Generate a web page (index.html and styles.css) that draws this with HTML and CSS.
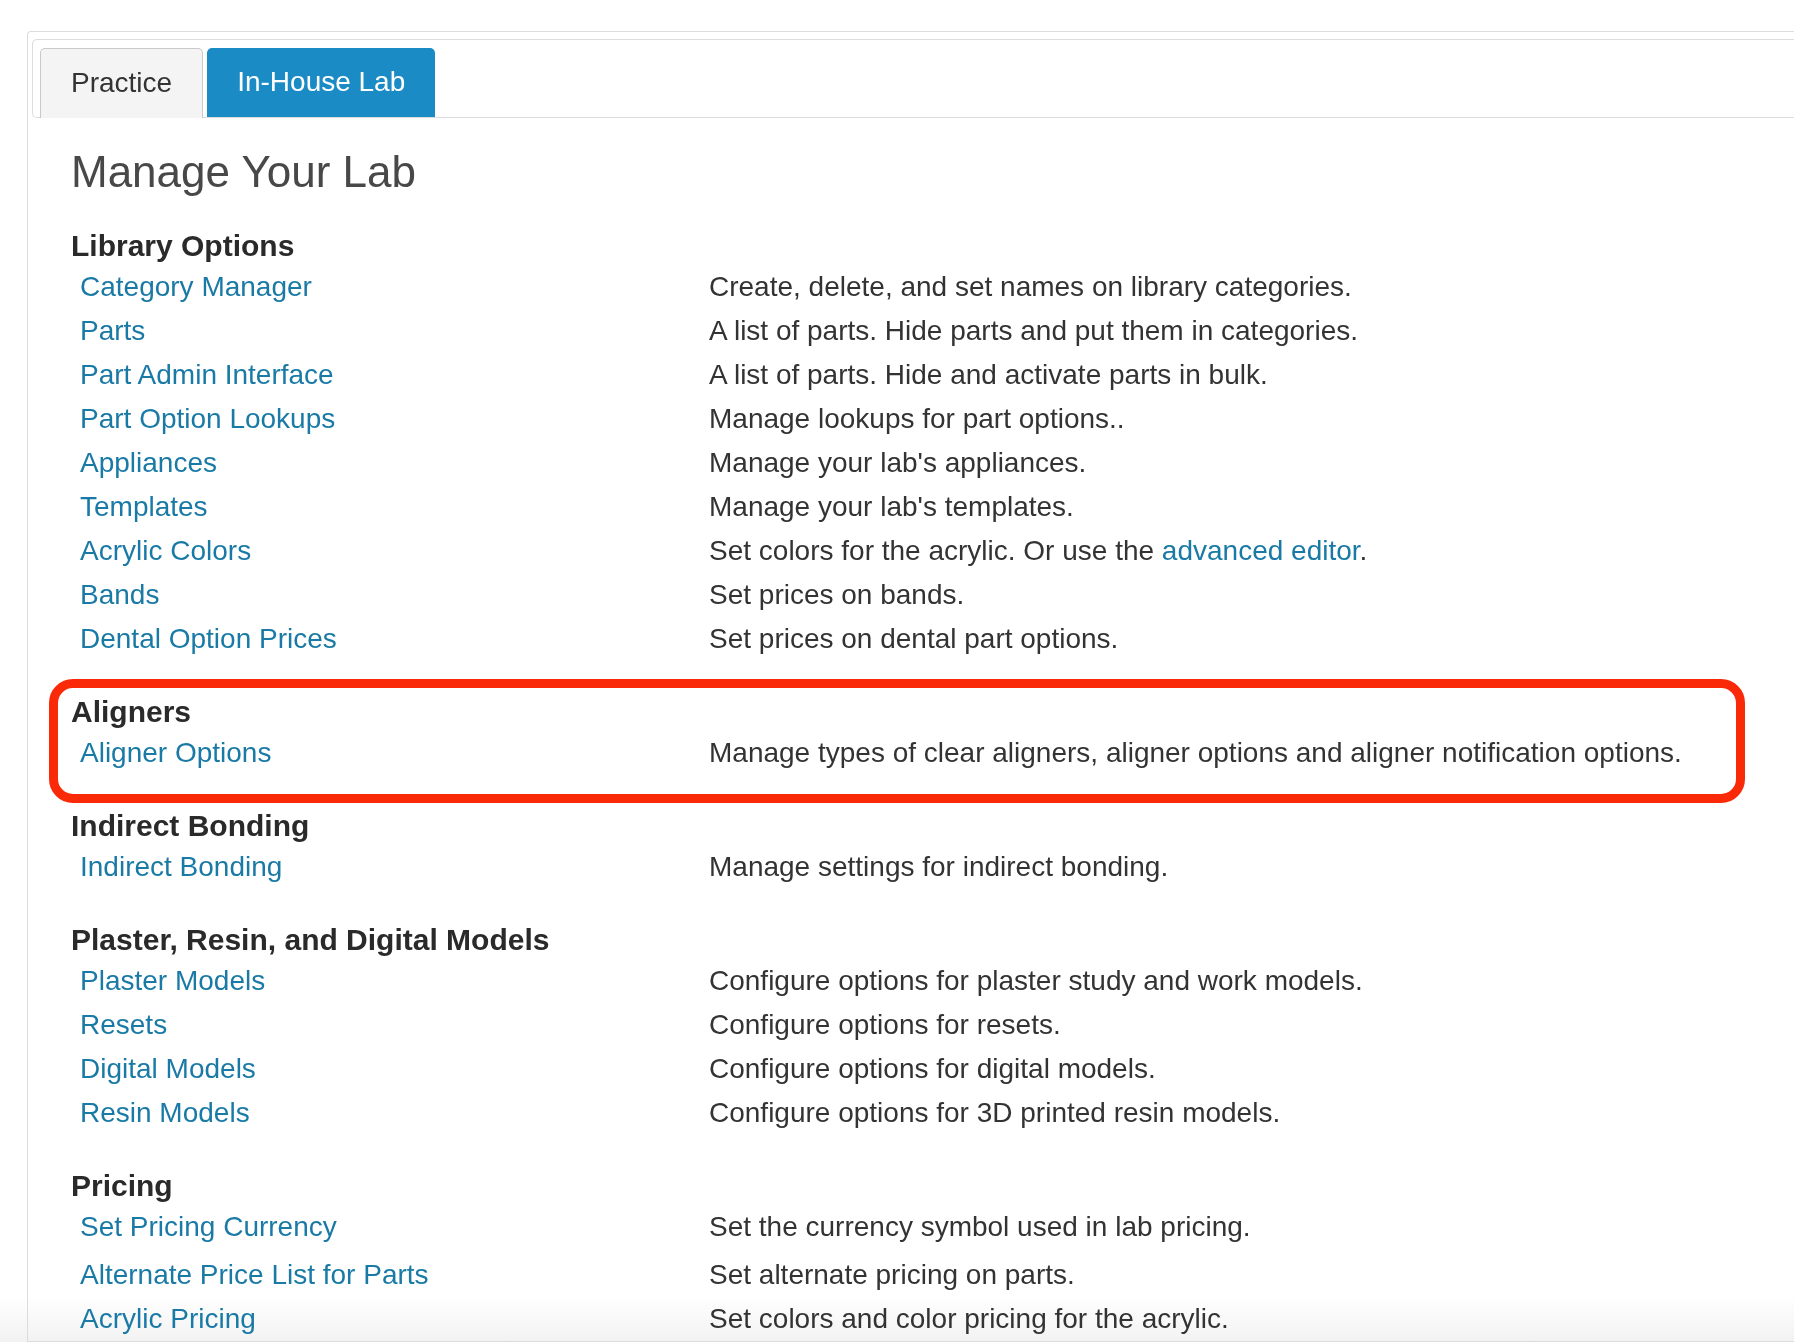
FILE: index.html
```html
<!DOCTYPE html>
<html lang="en">
<head>
    <meta charset="UTF-8">
    <meta name="viewport" content="width=device-width, initial-scale=1.0">
    <title>Manage Your Lab</title>
    <link rel="stylesheet" href="styles.css">
</head>
<body>
    <div class="panel">
        <ul class="tabs-nav">
            <li class="tab"><a href="#">Practice</a></li>
            <li class="tab tab-active"><a href="#">In-House Lab</a></li>
        </ul>

        <div class="content">
            <h1>Manage Your Lab</h1>

            <div class="group">
                <h3>Library Options</h3>
                <div class="row"><a href="#">Category Manager</a><span>Create, delete, and set names on library categories.</span></div>
                <div class="row"><a href="#">Parts</a><span>A list of parts. Hide parts and put them in categories.</span></div>
                <div class="row"><a href="#">Part Admin Interface</a><span>A list of parts. Hide and activate parts in bulk.</span></div>
                <div class="row"><a href="#">Part Option Lookups</a><span>Manage lookups for part options..</span></div>
                <div class="row"><a href="#">Appliances</a><span>Manage your lab's appliances.</span></div>
                <div class="row"><a href="#">Templates</a><span>Manage your lab's templates.</span></div>
                <div class="row"><a href="#">Acrylic Colors</a><span>Set colors for the acrylic. Or use the <a href="#">advanced editor</a>.</span></div>
                <div class="row"><a href="#">Bands</a><span>Set prices on bands.</span></div>
                <div class="row"><a href="#">Dental Option Prices</a><span>Set prices on dental part options.</span></div>
            </div>

            <div class="group highlight">
                <h3>Aligners</h3>
                <div class="row"><a href="#">Aligner Options</a><span>Manage types of clear aligners, aligner options and aligner notification options.</span></div>
            </div>

            <div class="group">
                <h3>Indirect Bonding</h3>
                <div class="row"><a href="#">Indirect Bonding</a><span>Manage settings for indirect bonding.</span></div>
            </div>

            <div class="group">
                <h3>Plaster, Resin, and Digital Models</h3>
                <div class="row"><a href="#">Plaster Models</a><span>Configure options for plaster study and work models.</span></div>
                <div class="row"><a href="#">Resets</a><span>Configure options for resets.</span></div>
                <div class="row"><a href="#">Digital Models</a><span>Configure options for digital models.</span></div>
                <div class="row"><a href="#">Resin Models</a><span>Configure options for 3D printed resin models.</span></div>
            </div>

            <div class="group">
                <h3>Pricing</h3>
                <div class="row"><a href="#">Set Pricing Currency</a><span>Set the currency symbol used in lab pricing.</span></div>
                <div class="row row-tall"><a href="#">Alternate Price List for Parts</a><span>Set alternate pricing on parts.</span></div>
                <div class="row"><a href="#">Acrylic Pricing</a><span>Set colors and color pricing for the acrylic.</span></div>
            </div>
        </div>
    </div>

    <div class="bottom-fade"></div>
</body>
</html>
```

FILE: styles.css
```css
html {
    background: #fff;
}
body {
    margin: 0;
    padding: 31px 0 0 27px;
    font-family: 'Liberation Sans', Arial, Helvetica, sans-serif;
    color: #333;
    overflow-x: hidden;
}
a {
    color: #1a7aa6;
    text-decoration: none;
}
.panel {
    border: 1px solid #dcdcdc;
    border-right: none;
    border-radius: 4px 0 0 0;
    padding: 7px 0 0 4px;
}
.tabs-nav {
    display: flex;
    gap: 4px;
    list-style: none;
    margin: 0;
    padding: 8px 0 0 7px;
    border: 1px solid #dcdcdc;
    border-right: none;
    border-radius: 5px 0 0 5px;
    background: #fff;
}
.tab {
    height: 68px;
    margin-bottom: -1px;
    padding-bottom: 1px;
    border-radius: 5px 5px 0 0;
}
.tab a {
    display: flex;
    align-items: center;
    height: 100%;
    padding: 0 30px;
    font-size: 28px;
    color: #333;
}
.tab:first-child {
    background: #f4f4f4;
    border: 1px solid #c9c9c9;
    border-bottom: none;
}
.tab-active {
    background: #1a8bc4;
}
.tab-active a {
    color: #fff;
    padding: 0 30px;
}
.content {
    padding: 0 0 0 39px;
}
h1 {
    margin: 30px 0 31px 0;
    font-size: 44px;
    line-height: 48px;
    font-weight: normal;
    color: #484848;
}
.group {
    margin-top: 32px;
}
.group:first-of-type {
    margin-top: 0;
}
.group h3 {
    margin: 0;
    font-size: 30px;
    line-height: 38px;
    font-weight: bold;
    color: #2a2a2a;
}
.row {
    display: grid;
    grid-template-columns: 629px 1fr;
    padding-left: 9px;
    font-size: 28px;
    line-height: 44px;
    white-space: nowrap;
}
.row-tall {
    padding-top: 4px;
}
.highlight {
    position: relative;
}
.highlight::after {
    content: "";
    position: absolute;
    top: -14px;
    bottom: -28px;
    left: -22px;
    right: 49px;
    border: 9px solid #fa2a08;
    border-radius: 24px;
    pointer-events: none;
}
/* light shade at the bottom edge, behind the text */
.bottom-fade {
    position: fixed;
    left: 0;
    right: 0;
    bottom: 0;
    height: 46px;
    z-index: -1;
    background: linear-gradient(rgba(240, 240, 240, 0), #f2f2f2);
}
```
